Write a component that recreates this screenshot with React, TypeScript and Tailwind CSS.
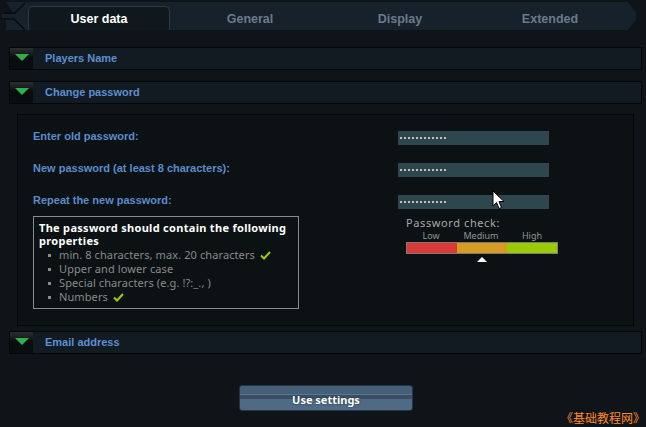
import React from "react";

const cond = "font-['Noto_Sans',sans-serif]";

function Arrow() {
  return (
    <div className="w-[23px] h-full bg-[linear-gradient(to_bottom,#2a2e31_0,#1c2023_5px,#0a0d0f_9px)] flex items-start justify-center pt-[6px]">
      <svg width="14" height="8" viewBox="0 0 14 8">
        <polygon points="0,0 14,0 7,7" fill="#2db14a" />
      </svg>
    </div>
  );
}

function Header({ title }: { title: string }) {
  return (
    <div className="ml-[9px] w-[633px] h-[23px] border border-[#04070a] bg-[#121a22] flex items-stretch">
      <Arrow />
      <div className="pl-[12px] flex items-center text-[11px] font-bold text-[#5b8fd2] leading-none">
        {title}
      </div>
    </div>
  );
}

function Dots() {
  return (
    <div className="w-[151px] h-[14px] bg-[#2e464e] flex items-center pl-[2px] gap-[2px]">
      {Array.from({ length: 12 }).map((_, i) => (
        <div key={i} className="w-[2px] h-[2px] bg-[#b9c5c6]" />
      ))}
    </div>
  );
}

function Check() {
  return (
    <svg width="11" height="9" viewBox="0 0 11 9" className="ml-[5px] inline-block">
      <polyline points="1,4.5 4,7.5 10,1" fill="none" stroke="#9ccf00" strokeWidth="2" />
    </svg>
  );
}

function Item({ children, check }: { children: React.ReactNode; check?: boolean }) {
  return (
    <div className="flex items-center h-[14px]">
      <div className="w-[3px] h-[3px] bg-[#8c8c8c] ml-[9px] mr-[8px]" />
      <span>{children}</span>
      {check && <Check />}
    </div>
  );
}

export default function App() {
  const tabs = ["User data", "General", "Display", "Extended"];
  return (
    <div className="relative w-[646px] h-[427px] overflow-hidden bg-[#0e1418] font-['Liberation_Sans',Arial,sans-serif] flex flex-col">
      {/* tab strip */}
      <div className="h-[30px] pt-[2px] flex">
        <div className="w-[25px] h-full relative">
          <svg width="25" height="28" viewBox="0 0 25 28" className="block">
            <polygon points="6,0 25,0 25,28 6,28 6,16 2,16 2,12 14,12" fill="#16212b" />
            <polyline points="25,1 15,11 4,11" fill="none" stroke="#070b0e" strokeWidth="1.5" />
            <polyline points="4,17 14,17 25,28" fill="none" stroke="#070b0e" strokeWidth="1.5" />
          </svg>
        </div>
        <div className="w-[611px] h-full bg-[#16212b] flex [clip-path:polygon(0_0,603px_0,611px_11px,611px_18px,603px_28px,0_28px)]">
          {tabs.map((t, i) =>
            i === 0 ? (
              <div key={t} className="w-[150px] h-full pt-[4px] pl-[3px] pr-[5px]">
                <div className="h-full bg-[#10171d] border-t border-x border-[#2b3a45] rounded-t-[5px] flex items-center justify-center pt-[2px] text-[12.5px] font-bold text-white">
                  {t}
                </div>
              </div>
            ) : (
              <div key={t} className="w-[150px] h-full pt-[6px] flex items-center justify-center text-[12.5px] font-bold text-[#6a7b8c]">
                {t}
              </div>
            )
          )}
        </div>
      </div>

      <div className="mt-[17px]">
        <Header title="Players Name" />
      </div>
      <div className="mt-[11px]">
        <Header title="Change password" />
      </div>

      {/* panel */}
      <div className="mt-[10px] ml-[17px] w-[617px] h-[212px] border border-[#05080a] bg-[#0c1114] pl-[15px] pt-[16px]">
        <div className="grid grid-cols-[365px_151px] gap-y-[18px]">
          {["Enter old password:", "New password (at least 8 characters):", "Repeat the new password:"].map((l) => (
            <React.Fragment key={l}>
              <div className="text-[11px] font-bold text-[#5a8ccc] leading-[10px]">{l}</div>
              <Dots />
            </React.Fragment>
          ))}
        </div>
        <div className="mt-[7px] flex">
          <div className={`w-[266px] h-[93px] border border-[#8a8a8a] px-[5px] pt-[4px] ${cond}`}>
            <div className="text-[11px] font-bold text-white leading-[13px] tracking-[0.3px]">
              The password should contain the following properties
            </div>
            <div className="mt-[1px] text-[11px] text-[#8a8a8a] leading-[14px] tracking-[0.1px]">
              <Item check>min. 8 characters, max. 20 characters</Item>
              <Item>Upper and lower case</Item>
              <Item>Special characters (e.g. !?:_., )</Item>
              <Item check>Numbers</Item>
            </div>
          </div>
          <div className={`ml-[107px] ${cond}`}>
            <div className="text-[11px] text-[#a9a9a9] leading-[13px] tracking-[0.6px]">Password check:</div>
            <div className="flex text-[9px] text-[#8d9595] leading-[11px] mt-[1px]">
              <div className="w-[50px] text-center">Low</div>
              <div className="w-[50px] text-center">Medium</div>
              <div className="w-[52px] text-center">High</div>
            </div>
            <div className="mt-[1px] w-[152px] h-[12px] border border-[#7b7b7b] flex">
              <div className="w-[50px] h-full bg-[#d93a36]" />
              <div className="w-[50px] h-full bg-[#d79a23]" />
              <div className="flex-1 h-full bg-[#9bcb07]" />
            </div>
            <div className="mt-[3px] ml-[71px]">
              <svg width="10" height="5" viewBox="0 0 10 5" className="block">
                <polygon points="5,0 10,5 0,5" fill="#ffffff" />
              </svg>
            </div>
          </div>
        </div>
      </div>

      <div className="mt-[5px]">
        <Header title="Email address" />
      </div>

      <div className="mt-[31px] ml-[239px] w-[174px] h-[26px] rounded-[3px] border border-[#263442] bg-[linear-gradient(to_bottom,#465f78_0,#465f78_8px,#5b7691_8px,#5b7691_9px,#3b4f64_9px,#3b4f64_13px,#4e6a85_13px)] flex items-center justify-center pt-[4px]">
        <span className={`text-[11px] font-bold text-white ${cond} [text-shadow:0_0_2px_#1c2a38]`}>Use settings</span>
      </div>

      {/* overlays */}
      <div className="absolute right-[1px] bottom-[2px] text-[12px] text-[#ff8a2a] font-['Noto_Sans_CJK_SC',sans-serif] leading-[15px]">
        《基础教程网》
      </div>
      <svg className="absolute left-[492px] top-[190px]" width="13" height="20" viewBox="0 0 13 20">
        <polygon points="1,1 1,16 4.5,12.5 7,18.5 9.5,17.5 7,11.5 12,11.5" fill="#ffffff" stroke="#000000" strokeWidth="1" />
      </svg>
    </div>
  );
}
